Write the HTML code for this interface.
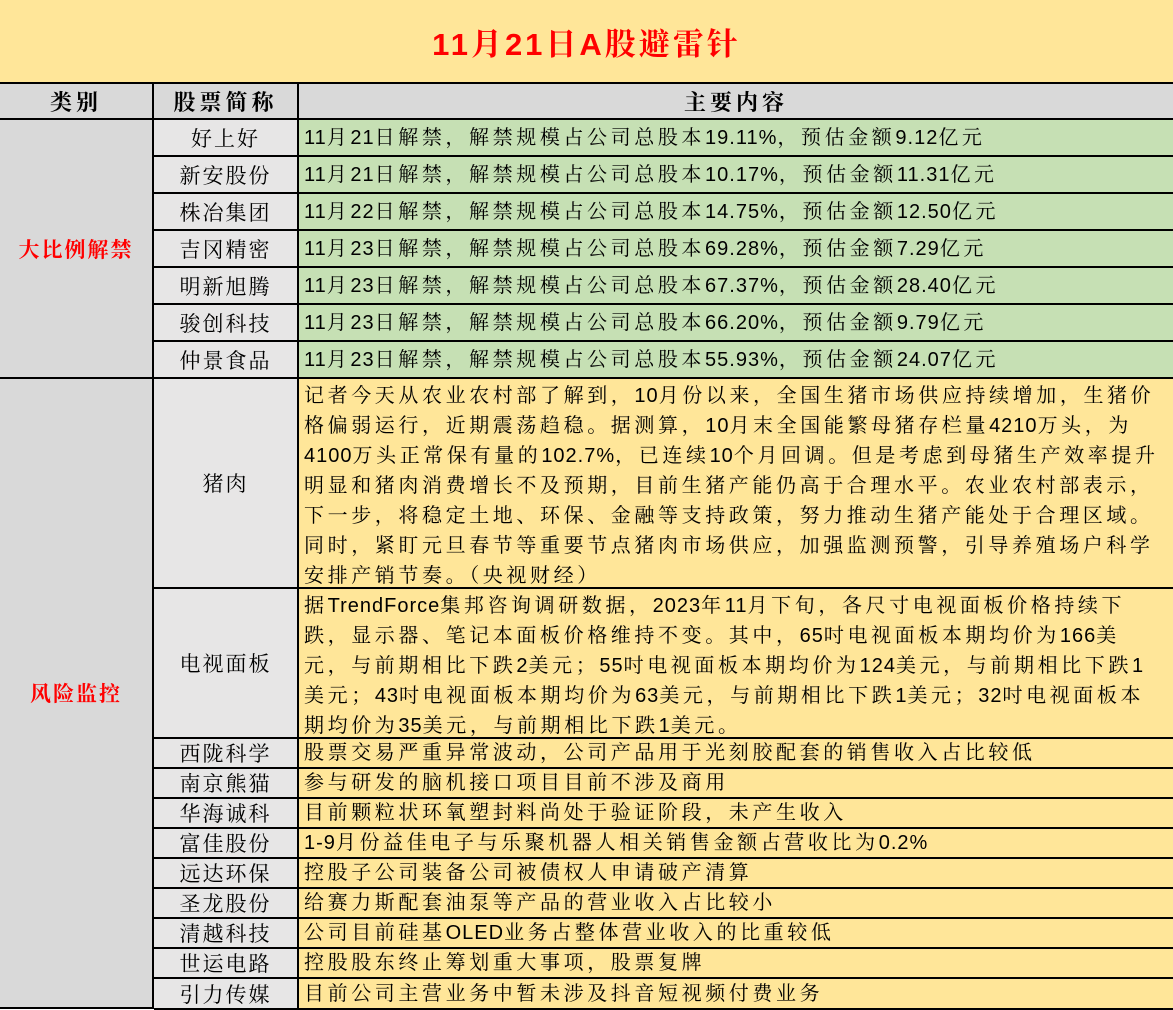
<!DOCTYPE html>
<html><head><meta charset="utf-8"><style>
*{margin:0;padding:0;box-sizing:border-box}
body{width:1173px;height:1009px;overflow:hidden;background:#fff;font-family:"Liberation Sans","Noto Serif CJK SC",serif;color:#000;position:relative}
.c{position:absolute;border-right:2px solid #000;border-bottom:2px solid #000;overflow:hidden}
.ctr{display:flex;align-items:center;justify-content:center}
.t{font-size:20px;letter-spacing:3.6px;white-space:nowrap;padding-left:5px;line-height:30px}
.d{letter-spacing:1px}
.g{background:#c6e0b4}.y{background:#ffe699}.gr{background:#d9d9d9}.l{background:#e7e6e6}
.n{font-size:21px;letter-spacing:2px}
.red{color:#f00;font-weight:bold;font-size:21px;letter-spacing:2px}
</style></head><body>
<div class="c y ctr" style="left:0;top:0;width:1173px;height:84px;border-right:none"><span style="color:#f00;font-weight:bold;font-size:31px;letter-spacing:3px;margin-left:0px">11月21日A股避雷针</span></div>
<div class="c gr ctr" style="left:0;top:84px;width:154px;height:36px"><b style="font-size:22px;letter-spacing:4px">类别</b></div>
<div class="c gr ctr" style="left:154px;top:84px;width:145px;height:36px"><b style="font-size:22px;letter-spacing:4px">股票简称</b></div>
<div class="c gr ctr" style="left:299px;top:84px;width:874px;height:36px;border-right:none"><b style="font-size:22px;letter-spacing:4px">主要内容</b></div>

<div class="c gr ctr" style="left:0;top:120px;width:154px;height:259px"><span class="red">大比例解禁</span></div>
<div class="c gr ctr" style="left:0;top:379px;width:154px;height:630px"><span class="red">风险监控</span></div>

<div id="rows"></div>
<script>
var R=[
["好上好","11月21日解禁，解禁规模占公司总股本19.11%，预估金额9.12亿元",37,"g"],
["新安股份","11月21日解禁，解禁规模占公司总股本10.17%，预估金额11.31亿元",37,"g"],
["株冶集团","11月22日解禁，解禁规模占公司总股本14.75%，预估金额12.50亿元",37,"g"],
["吉冈精密","11月23日解禁，解禁规模占公司总股本69.28%，预估金额7.29亿元",37,"g"],
["明新旭腾","11月23日解禁，解禁规模占公司总股本67.37%，预估金额28.40亿元",37,"g"],
["骏创科技","11月23日解禁，解禁规模占公司总股本66.20%，预估金额9.79亿元",37,"g"],
["仲景食品","11月23日解禁，解禁规模占公司总股本55.93%，预估金额24.07亿元",37,"g"],
["猪肉","记者今天从农业农村部了解到，10月份以来，全国生猪市场供应持续增加，生猪价<br>格偏弱运行，近期震荡趋稳。据测算，10月末全国能繁母猪存栏量4210万头，为<br>4100万头正常保有量的102.7%，已连续10个月回调。但是考虑到母猪生产效率提升<br>明显和猪肉消费增长不及预期，目前生猪产能仍高于合理水平。农业农村部表示，<br>下一步，将稳定土地、环保、金融等支持政策，努力推动生猪产能处于合理区域。<br>同时，紧盯元旦春节等重要节点猪肉市场供应，加强监测预警，引导养殖场户科学<br>安排产销节奏。（央视财经）",210,"y"],
["电视面板","据TrendForce集邦咨询调研数据，2023年11月下旬，各尺寸电视面板价格持续下<br>跌，显示器、笔记本面板价格维持不变。其中，65吋电视面板本期均价为166美<br>元，与前期相比下跌2美元；55吋电视面板本期均价为124美元，与前期相比下跌1<br>美元；43吋电视面板本期均价为63美元，与前期相比下跌1美元；32吋电视面板本<br>期均价为35美元，与前期相比下跌1美元。",150,"y"],
["西陇科学","股票交易严重异常波动，公司产品用于光刻胶配套的销售收入占比较低",30,"y"],
["南京熊猫","参与研发的脑机接口项目目前不涉及商用",30,"y"],
["华海诚科","目前颗粒状环氧塑封料尚处于验证阶段，未产生收入",30,"y"],
["富佳股份","1-9月份益佳电子与乐聚机器人相关销售金额占营收比为0.2%",30,"y"],
["远达环保","控股子公司装备公司被债权人申请破产清算",30,"y"],
["圣龙股份","给赛力斯配套油泵等产品的营业收入占比较小",30,"y"],
["清越科技","公司目前硅基OLED业务占整体营业收入的比重较低",30,"y"],
["世运电路","控股股东终止筹划重大事项，股票复牌",30,"y"],
["引力传媒","目前公司主营业务中暂未涉及抖音短视频付费业务",31,"y"]];
var y=120,h="";
R.forEach(function(r){
h+='<div class="c l ctr" style="left:154px;top:'+y+'px;width:145px;height:'+r[2]+'px"><span class="n">'+r[0]+'</span></div>';
var multi=r[1].indexOf("<br>")>=0;
var txt=r[1].replace(/[0-9A-Za-z.%\-]+/g,function(m){return '<span class="d">'+m+'</span>';}).replace(/<span class="d">br<\/span>/g,'br');
h+='<div class="c '+r[3]+'" style="left:299px;top:'+y+'px;width:874px;height:'+r[2]+'px;border-right:none;'+(multi?'padding-top:2px':'display:flex;align-items:center')+'"><div class="t">'+txt+'</div></div>';
y+=r[2];
});
document.getElementById("rows").innerHTML=h;
</script>
</body></html>
